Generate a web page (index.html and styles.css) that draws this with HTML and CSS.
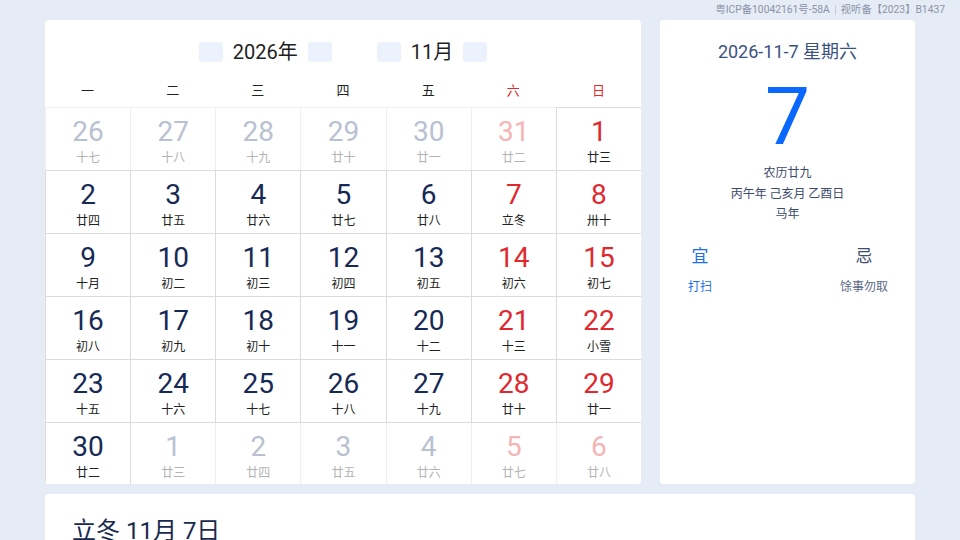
FILE: index.html
```html
<!DOCTYPE html>
<html lang="zh-CN">
<head>
<meta charset="utf-8">
<title>日历</title>
<link rel="stylesheet" href="styles.css">
</head>
<body>
<div class="topbar"><span>粤ICP备10042161号-58A</span><span class="sep"></span><span>视听备【2023】B1437</span></div>
<div class="main">
  <section class="cal">
    <div class="title">
      <span class="btn"></span><span class="ttext">2026年</span><span class="btn"></span>
      <span class="spacer"></span>
      <span class="btn"></span><span class="ttext">11月</span><span class="btn"></span>
    </div>
    <div class="weekdays">
      <span>一</span><span>二</span><span>三</span><span>四</span><span>五</span><span class="red">六</span><span class="red">日</span>
    </div>
    <div class="grid">
      <div class="cell out"><div class="num">26</div><div class="lunar">十七</div></div>
      <div class="cell out"><div class="num">27</div><div class="lunar">十八</div></div>
      <div class="cell out"><div class="num">28</div><div class="lunar">十九</div></div>
      <div class="cell out"><div class="num">29</div><div class="lunar">廿十</div></div>
      <div class="cell out"><div class="num">30</div><div class="lunar">廿一</div></div>
      <div class="cell out we"><div class="num">31</div><div class="lunar">廿二</div></div>
      <div class="cell we"><div class="num">1</div><div class="lunar">廿三</div></div>

      <div class="cell"><div class="num">2</div><div class="lunar">廿四</div></div>
      <div class="cell"><div class="num">3</div><div class="lunar">廿五</div></div>
      <div class="cell"><div class="num">4</div><div class="lunar">廿六</div></div>
      <div class="cell"><div class="num">5</div><div class="lunar">廿七</div></div>
      <div class="cell"><div class="num">6</div><div class="lunar">廿八</div></div>
      <div class="cell we"><div class="num">7</div><div class="lunar">立冬</div></div>
      <div class="cell we"><div class="num">8</div><div class="lunar">卅十</div></div>

      <div class="cell"><div class="num">9</div><div class="lunar">十月</div></div>
      <div class="cell"><div class="num">10</div><div class="lunar">初二</div></div>
      <div class="cell"><div class="num">11</div><div class="lunar">初三</div></div>
      <div class="cell"><div class="num">12</div><div class="lunar">初四</div></div>
      <div class="cell"><div class="num">13</div><div class="lunar">初五</div></div>
      <div class="cell we"><div class="num">14</div><div class="lunar">初六</div></div>
      <div class="cell we"><div class="num">15</div><div class="lunar">初七</div></div>

      <div class="cell"><div class="num">16</div><div class="lunar">初八</div></div>
      <div class="cell"><div class="num">17</div><div class="lunar">初九</div></div>
      <div class="cell"><div class="num">18</div><div class="lunar">初十</div></div>
      <div class="cell"><div class="num">19</div><div class="lunar">十一</div></div>
      <div class="cell"><div class="num">20</div><div class="lunar">十二</div></div>
      <div class="cell we"><div class="num">21</div><div class="lunar">十三</div></div>
      <div class="cell we"><div class="num">22</div><div class="lunar">小雪</div></div>

      <div class="cell"><div class="num">23</div><div class="lunar">十五</div></div>
      <div class="cell"><div class="num">24</div><div class="lunar">十六</div></div>
      <div class="cell"><div class="num">25</div><div class="lunar">十七</div></div>
      <div class="cell"><div class="num">26</div><div class="lunar">十八</div></div>
      <div class="cell"><div class="num">27</div><div class="lunar">十九</div></div>
      <div class="cell we"><div class="num">28</div><div class="lunar">廿十</div></div>
      <div class="cell we"><div class="num">29</div><div class="lunar">廿一</div></div>

      <div class="cell"><div class="num">30</div><div class="lunar">廿二</div></div>
      <div class="cell out"><div class="num">1</div><div class="lunar">廿三</div></div>
      <div class="cell out"><div class="num">2</div><div class="lunar">廿四</div></div>
      <div class="cell out"><div class="num">3</div><div class="lunar">廿五</div></div>
      <div class="cell out"><div class="num">4</div><div class="lunar">廿六</div></div>
      <div class="cell out we"><div class="num">5</div><div class="lunar">廿七</div></div>
      <div class="cell out we"><div class="num">6</div><div class="lunar">廿八</div></div>
    </div>
  </section>
  <aside class="side">
    <div class="date">2026-11-7 星期六</div>
    <div class="big">7</div>
    <div class="info">
      <div>农历廿九</div>
      <div>丙午年 己亥月 乙酉日</div>
      <div>马年</div>
    </div>
    <div class="yiji">
      <div class="col yi"><div class="head">宜</div><div class="item">打扫</div></div>
      <div class="col ji"><div class="head">忌</div><div class="item">馀事勿取</div></div>
    </div>
  </aside>
</div>
<section class="bottom">
  <h2 class="term">立冬 11月 7日</h2>
</section>
</body>
</html>
```
FILE: styles.css
```css
html, body {
  margin: 0;
  padding: 0;
}
body {
  background: #e6ecf6;
  font-family: Roboto, "Noto Sans CJK SC", sans-serif;
  width: 960px;
  height: 540px;
  overflow: hidden;
}
.topbar {
  height: 20px;
  display: flex;
  justify-content: flex-end;
  align-items: center;
  padding-right: 15px;
  font-size: 10.3px;
  color: #8a93a6;
  line-height: 18px;
}
.sep {
  display: inline-block;
  width: 1px;
  height: 10px;
  background: #c8ccd6;
  margin: 0 5px;
}
.main {
  width: 870px;
  margin: 0 auto;
  display: flex;
  gap: 19px;
}
.cal {
  width: 596px;
  height: 464px;
  background: #fff;
  border-radius: 4px;
  overflow: hidden;
}
.title {
  height: 58px;
  box-sizing: border-box;
  padding-top: 22px;
  display: flex;
  justify-content: center;
  align-items: flex-start;
}
.btn {
  width: 24px;
  height: 20px;
  border-radius: 3px;
  background: #ebf2fd;
}
.ttext {
  font-size: 20px;
  line-height: 20px;
  color: #1f1f1f;
  margin: 0 10px;
}
.spacer {
  width: 45px;
}
.weekdays {
  height: 29px;
  display: grid;
  grid-template-columns: repeat(7, 1fr);
  font-size: 13px;
  line-height: 25px;
  color: #222;
  text-align: center;
}
.weekdays .red {
  color: #e02a2a;
}
.grid {
  display: grid;
  grid-template-columns: repeat(7, 1fr);
  grid-auto-rows: 63px;
}
.cell {
  border: 1px solid #dcdcdc;
  margin: 0 -1px -1px 0;
  text-align: center;
  padding-top: 10px;
  position: relative;
  z-index: 1;
  background: #fff;
}
.cell.out {
  border-color: #efefef;
  z-index: 0;
}
.num {
  font-family: Roboto, sans-serif;
  font-size: 28px;
  line-height: 28px;
  color: #172a55;
}
.lunar {
  font-family: "Noto Sans CJK SC", sans-serif;
  font-size: 12px;
  line-height: 16px;
  margin-top: 3px;
  color: #222;
}
.cell.we .num {
  color: #e0282e;
}
.cell.out .num {
  color: #b9c1d1;
}
.cell.out.we .num {
  color: #f5b5b5;
}
.cell.out .lunar {
  color: #b3b3b3;
}
.side {
  flex: 1;
  height: 464px;
  background: #fff;
  border-radius: 4px;
  text-align: center;
  padding-top: 20px;
  box-sizing: border-box;
  font-family: Roboto, "Noto Sans CJK SC", sans-serif;
}
.date {
  font-size: 18px;
  line-height: 24px;
  color: #3b5280;
}
.big {
  margin-top: 18px;
  font-size: 80px;
  line-height: 70px;
  color: #0b68ff;
}
.info {
  margin-top: 10px;
  font-size: 12px;
  line-height: 20.5px;
  color: #3c4a6b;
  font-family: "Noto Sans CJK SC", sans-serif;
}
.yiji {
  margin-top: 19px;
  display: flex;
  justify-content: space-between;
  padding: 0 27px 0 28px;
  font-family: "Noto Sans CJK SC", sans-serif;
}
.col .head {
  font-size: 17px;
  line-height: 24px;
}
.col .item {
  margin-top: 10px;
  font-size: 12px;
  line-height: 18px;
}
.yi .head, .yi .item {
  color: #1d6fe6;
}
.ji .head {
  color: #3c4a6b;
}
.ji .item {
  color: #5a6785;
}
.bottom {
  width: 870px;
  margin: 10px auto 0;
  background: #fff;
  border-radius: 4px;
  height: 100px;
  box-sizing: border-box;
  padding: 21px 27px 0;
}
.term {
  margin: 0;
  font-weight: 400;
  font-size: 24px;
  line-height: 32px;
  color: #1a2a4f;
  font-family: Roboto, "Noto Sans CJK SC", sans-serif;
}
```
